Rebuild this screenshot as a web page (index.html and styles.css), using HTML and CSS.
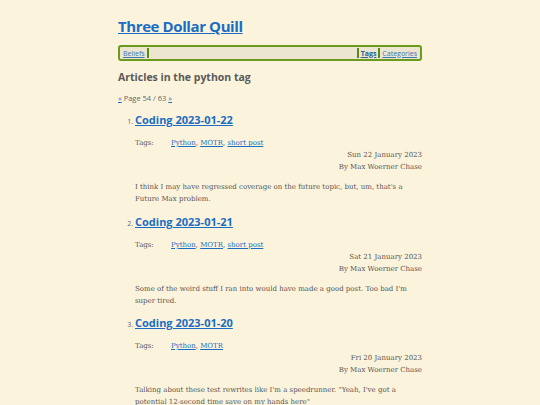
FILE: index.html
```html
<!DOCTYPE html>
<html>
<head>
<meta charset="utf-8">
<link rel="stylesheet" href="styles.css">
</head>
<body>
<div class="page">
  <h1 class="site-title"><a href="#">Three Dollar Quill</a></h1>
  <nav class="nav">
    <a href="#" class="nav-link">Beliefs</a>
    <span class="sep"></span>
    <span class="spacer"></span>
    <span class="sep"></span>
    <a href="#" class="nav-link current">Tags</a>
    <span class="sep"></span>
    <a href="#" class="nav-link">Categories</a>
  </nav>
  <h2 class="page-heading">Articles in the python tag</h2>
  <p class="pager"><a href="#">«</a> Page 54 / 63 <a href="#">»</a></p>
  <ol class="articles">
    <li class="article">
      <h3 class="article-title"><a href="#">Coding 2023-01-22</a></h3>
      <div class="tags"><span class="tags-label">Tags:</span><span><a href="#">Python</a>, <a href="#">MOTR</a>, <a href="#">short post</a></span></div>
      <div class="meta">Sun 22 January 2023</div>
      <div class="meta">By Max Woerner Chase</div>
      <p class="summary">I think I may have regressed coverage on the future topic, but, um, that's a Future Max problem.</p>
    </li>
    <li class="article">
      <h3 class="article-title"><a href="#">Coding 2023-01-21</a></h3>
      <div class="tags"><span class="tags-label">Tags:</span><span><a href="#">Python</a>, <a href="#">MOTR</a>, <a href="#">short post</a></span></div>
      <div class="meta">Sat 21 January 2023</div>
      <div class="meta">By Max Woerner Chase</div>
      <p class="summary">Some of the weird stuff I ran into would have made a good post. Too bad I'm super tired.</p>
    </li>
    <li class="article">
      <h3 class="article-title"><a href="#">Coding 2023-01-20</a></h3>
      <div class="tags"><span class="tags-label">Tags:</span><span><a href="#">Python</a>, <a href="#">MOTR</a></span></div>
      <div class="meta">Fri 20 January 2023</div>
      <div class="meta">By Max Woerner Chase</div>
      <p class="summary">Talking about these test rewrites like I'm a speedrunner. "Yeah, I've got a potential 12-second time save on my hands here"</p>
    </li>
  </ol>
</div>
</body>
</html>
```
FILE: styles.css
```css
html, body {
  margin: 0;
  padding: 0;
  background: #fcf3dc;
}
body {
  font-family: "DejaVu Serif", serif;
  color: #555;
}
.page {
  width: 304px;
  margin: 0 auto;
  padding-top: 15px;
}
a { color: #1a6dc2; }
.site-title {
  margin: 0;
  font-family: "Open Sans", sans-serif;
  font-size: 15px;
  letter-spacing: -0.4px;
  font-weight: 700;
  line-height: 22px;
}
.nav {
  margin-top: 8px;
  display: flex;
  align-items: center;
  height: 12px;
  border: 2px solid #6a9a1e;
  border-radius: 3px;
  background: #ece5d0;
  padding: 0 2px;
  font-family: "Open Sans", sans-serif;
  font-size: 7px;
}
.nav-link {
  color: #3a78b8;
  padding: 0 1px;
}
.nav-link.current { font-weight: 700; color: #2a5f9a; }
.sep {
  width: 2px;
  height: 10px;
  background: #5a8a18;
  margin: 0 1px;
}
.spacer { flex: 1; }
.page-heading {
  margin: 8px 0 0;
  font-family: "Open Sans", sans-serif;
  font-size: 10.5px;
  font-weight: 700;
  color: #5a5a5a;
  line-height: 16px;
}
.pager {
  margin: 8px 0 0;
  font-family: "Open Sans", sans-serif;
  font-size: 7.5px;
  line-height: 10px;
  color: #666;
}
.articles {
  margin: 9px 0 0;
  padding-left: 17px;
  font-size: 7px;
}
.article { margin-bottom: 8.5px; }
.article::marker { font-family: "Open Sans", sans-serif; font-size: 7px; color: #666; }
.article-title {
  margin: 0;
  font-family: "Open Sans", sans-serif;
  font-size: 11px;
  font-weight: 700;
  line-height: 16px;
}
.tags {
  display: flex;
  margin-top: 9px;
  font-size: 7px;
  line-height: 12px;
}
.tags-label { width: 36px; }
.meta {
  text-align: right;
  font-size: 7px;
  line-height: 12px;
}
.summary {
  margin: 8px 0 0;
  font-size: 7px;
  line-height: 12px;
}
```
